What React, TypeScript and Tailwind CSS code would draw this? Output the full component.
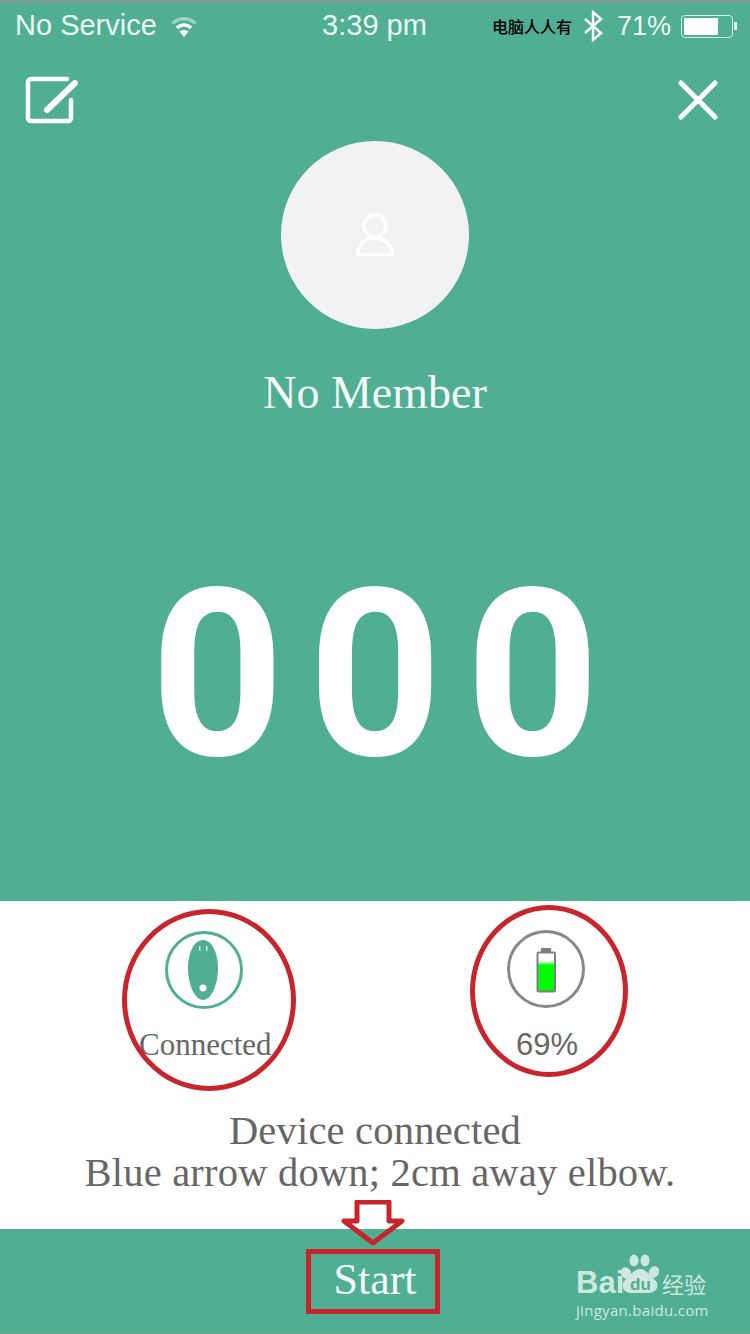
const SERIF = "font-['Liberation_Serif',serif]";

const EditIcon = () => (
  <svg width="56" height="56" viewBox="0 0 56 56" fill="none" stroke="white" strokeLinecap="round" strokeLinejoin="round">
    <path d="M44 6H8a3 3 0 0 0-3 3v36a3 3 0 0 0 3 3h37a3 3 0 0 0 3-3V27" strokeWidth="4.5" />
    <path d="M24 37L52 10" strokeWidth="6" />
  </svg>
);

const CloseIcon = () => (
  <svg width="40" height="40" viewBox="0 0 40 40" fill="none" stroke="white" strokeWidth="5" strokeLinecap="round">
    <path d="M3 3L37 37M37 3L3 37" />
  </svg>
);

const WifiIcon = () => (
  <svg width="28" height="22" viewBox="0 0 26 22" fill="none">
    <path d="M1.5 8.5C8 2 18 2 24.5 8.5" stroke="white" strokeOpacity="0.45" strokeWidth="3.5" />
    <path d="M6 13C10 9 16 9 20 13" stroke="white" strokeWidth="3.5" />
    <path d="M13 22L8.5 16.5C11 14.5 15 14.5 17.5 16.5Z" fill="white" />
  </svg>
);

const BluetoothIcon = () => (
  <svg width="20" height="32" viewBox="0 0 20 32" fill="none" stroke="white" strokeWidth="2.4">
    <path d="M2 9L18 23L10 30V2L18 9L2 23" />
  </svg>
);

const UserIcon = () => (
  <svg width="40" height="44" viewBox="0 0 40 44" fill="none" stroke="white" strokeWidth="3.5" strokeLinejoin="round">
    <circle cx="20" cy="13" r="11" />
    <path d="M2.5 41.5C3 32 10 25 20 25C30 25 37 32 37.5 41.5Z" />
  </svg>
);

const DeviceIcon = () => (
  <svg width="80" height="80" viewBox="0 0 80 80">
    <circle cx="40" cy="40" r="37.5" fill="white" stroke="#50AE92" strokeWidth="3" />
    <path d="M39 10C49 10 54 25 54 38C54 55 47 70 39 70C31 70 24 55 24 38C24 25 29 10 39 10Z" fill="#50AE92" />
    <rect x="35" y="16" width="1.5" height="5" fill="white" fillOpacity="0.7" />
    <rect x="42" y="16" width="1.5" height="5" fill="white" fillOpacity="0.7" />
    <circle cx="39" cy="58" r="3.5" fill="white" />
  </svg>
);

const BatteryIcon = () => (
  <svg width="80" height="80" viewBox="0 0 80 80">
    <defs>
      <linearGradient id="charge" x1="0" y1="0" x2="0" y2="1">
        <stop offset="0" stopColor="#ffffff" />
        <stop offset="0.22" stopColor="#ffffff" />
        <stop offset="0.32" stopColor="#00ff00" />
        <stop offset="1" stopColor="#00ff00" />
      </linearGradient>
    </defs>
    <circle cx="39" cy="39" r="37.5" fill="white" stroke="#888888" strokeWidth="3" />
    <rect x="34" y="18" width="10" height="5" fill="#7f7f7f" />
    <rect x="30.5" y="22.5" width="17.5" height="39" rx="1" fill="url(#charge)" stroke="#7f7f7f" strokeWidth="2" />
  </svg>
);

const PawIcon = () => (
  <svg width="42" height="42" viewBox="0 0 42 42" fill="#cfe8df">
    <ellipse cx="7" cy="20" rx="5" ry="6" transform="rotate(-25 7 20)" />
    <ellipse cx="15" cy="7.5" rx="4.5" ry="6" />
    <ellipse cx="26" cy="7.5" rx="4.5" ry="6" />
    <ellipse cx="35" cy="19" rx="5" ry="6" transform="rotate(25 35 19)" />
    <path d="M21 16C27 16 30 22 36 27C41 32 38 40 30 40H12C4 40 1 32 6 27C12 22 15 16 21 16Z" />
  </svg>
);

const RedArrow = () => (
  <svg width="64" height="46" viewBox="0 0 64 46" fill="none" stroke="#C8242B" strokeWidth="5" strokeLinejoin="round">
    <path d="M16 2H48V21H61L32 43L3 21H16Z" fill="none" />
  </svg>
);

function BatterySlot() {
  return (
    <>
      <div className="ml-[1px]"><BatteryIcon /></div>
      <div className="font-['Liberation_Sans',sans-serif] text-[31px] leading-[34px] mt-[18px] ml-[10px] text-[#666666]">69%</div>
    </>
  );
}

export default function App() {
  return (
    <div className="relative w-[750px] h-[1334px] overflow-hidden bg-white flex flex-col border-t-[3px] border-b border-t-[#7f9f94] border-b-[#7f9f94]">
      <div className="h-[898px] bg-[#50AE92] flex flex-col items-center text-white shrink-0">
        {/* status bar */}
        <div className="w-full h-[46px] pl-[15px] pr-[13px] flex items-center justify-between font-['Liberation_Sans',sans-serif] text-[29px] shrink-0 text-[#ecf8f3]">
          <div className="w-[307px] flex items-center gap-[13px]">
            <span>No Service</span>
            <WifiIcon />
          </div>
          <span className="font-medium">3:39 pm</span>
          <div className="w-[310px] flex items-center justify-end">
            <span className="text-[16px] text-black font-['Noto_Sans_CJK_SC',serif] font-medium mr-[11px]">电脑人人有</span>
            <BluetoothIcon />
            <span className="ml-[14px] text-[27px]">71%</span>
            <div className="ml-[10px] w-[52px] h-[23px] border border-[#d9efe7] rounded-[4px] p-[2px] flex">
              <div className="w-[34px] bg-white rounded-[1px]" />
            </div>
            <div className="w-[3px] h-[8px] ml-[1px] bg-[#d9efe7]" />
          </div>
        </div>

        {/* action row */}
        <div className="w-full pl-[23px] pr-[32px] mt-[24px] flex items-start justify-between shrink-0">
          <EditIcon />
          <div className="mt-[7px]">
            <CloseIcon />
          </div>
        </div>

        <div className="w-[188px] h-[188px] rounded-full bg-[#f2f2f2] mt-[12px] flex items-center justify-center shrink-0">
          <UserIcon />
        </div>
        <div className={`${SERIF} text-[46px] leading-[52px] mt-[38px] text-[#f4fbf8]`}>No Member</div>
        <div className="mt-[140px] font-['Roboto',sans-serif] font-bold text-[233px] leading-[233px] tracking-[24px] pl-[24px]">000</div>
      </div>

      {/* device state */}
      <div className="flex-1 flex flex-col items-center bg-white">
        <div className="w-full flex pt-[29px] h-[186px] shrink-0">
          <div className="w-[408px] pl-[139px] flex flex-col items-start">
            <div className="ml-[25px]"><DeviceIcon /></div>
            <div className={`${SERIF} text-[31px] leading-[34px] mt-[18px] text-[#666666]`}>Connected</div>
          </div>
          <div className="flex flex-col items-start pl-[98px]">
            <BatterySlot />
          </div>
        </div>
        <div className={`${SERIF} text-[40.5px] tracking-[0.2px] leading-[42px] text-center text-[#666666] mt-[23px]`}>
          <div>Device connected</div>
          <div className="ml-[10px]">Blue arrow down; 2cm away elbow.</div>
        </div>
      </div>

      {/* footer */}
      <div className="h-[104px] bg-[#50AE92] relative flex items-center justify-center shrink-0">
        <span className={`${SERIF} text-[44px] text-[#f4fbf8] -mt-[2px]`}>Start</span>
        <div className="absolute left-[576px] top-[25px] w-[140px] text-[#cfe8df]">
          <div className="flex items-end h-[46px] relative">
            <span className="font-['Liberation_Sans',sans-serif] font-bold text-[31px] leading-[34px]">Bai</span>
            <div className="absolute left-[43px] -top-[1px]"><PawIcon /></div>
            <span className="absolute left-[54px] top-[22px] font-['Liberation_Sans',sans-serif] font-bold text-[17px] leading-[17px] text-[#50AE92]">du</span>
            <span className="absolute left-[86px] top-[14px] font-['Noto_Sans_CJK_SC',sans-serif] text-[22px] leading-[30px]">经验</span>
          </div>
          <div className="font-['Open_Sans',sans-serif] text-[15px] leading-[20px] tracking-[0.3px]">jingyan.baidu.com</div>
        </div>
      </div>

      {/* red annotations drawn over the screenshot */}
      <div className="absolute left-[122px] top-[906px] w-[174px] h-[182px] rounded-[50%] border-[5px] border-[#C8242B]" />
      <div className="absolute left-[470px] top-[902px] w-[158px] h-[172px] rounded-[50%] border-[5px] border-[#C8242B]" />
      <div className="absolute left-[341px] top-[1197px]"><RedArrow /></div>
      <div className="absolute left-[306px] top-[1246px] w-[134px] h-[65px] border-[5px] border-[#C8242B]" />
    </div>
  );
}
